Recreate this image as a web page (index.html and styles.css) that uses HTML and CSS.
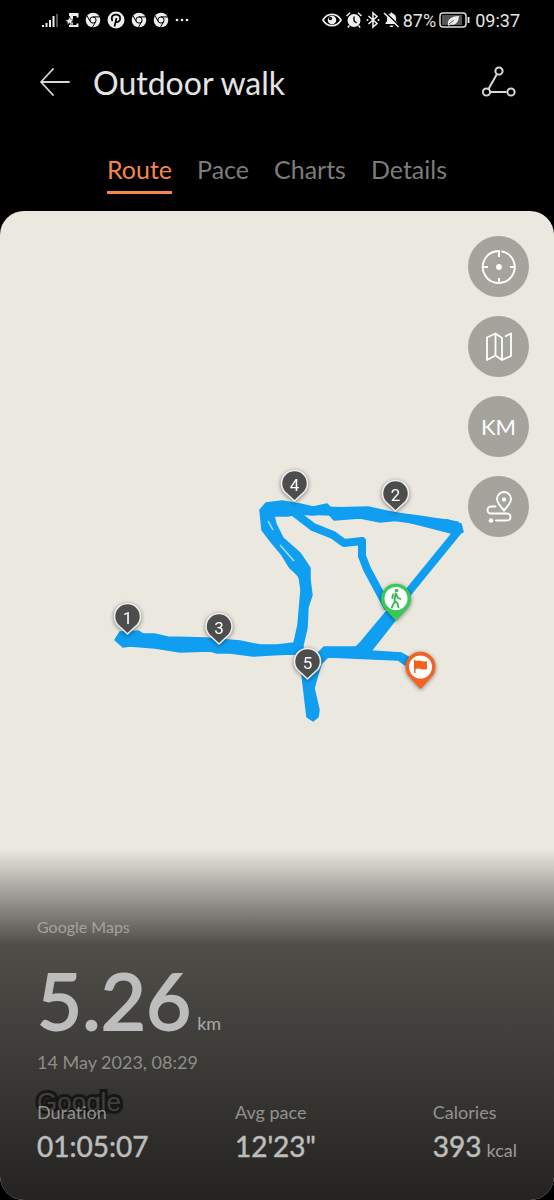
FILE: index.html
```html
<!DOCTYPE html>
<html lang="en">
<head>
<meta charset="utf-8">
<meta name="viewport" content="width=device-width, initial-scale=1">
<title>Outdoor walk</title>
<link rel="stylesheet" href="styles.css">
</head>
<body>
<svg class="defs" aria-hidden="true">
  <defs>
    <symbol id="chrome" viewBox="0 0 16 16">
      <circle cx="8" cy="8" r="7.3" fill="#eee"/>
      <circle cx="8" cy="8" r="3.1" fill="none" stroke="#000" stroke-width="1"/>
      <path d="M8 4.9h7M5.3 9.6L2 3.8M10.7 9.6L7.4 15.3" stroke="#000" stroke-width="1"/>
    </symbol>
    <symbol id="pin" viewBox="0 0 32 36" overflow="visible">
      <path d="M16 32L5.800 22.500A13 13 0 1 1 26.200 22.500Z" fill="#4d4d4d" stroke="#eee" stroke-width="1.600" stroke-linejoin="round"/>
    </symbol>
  </defs>
</svg>

<div class="status">
  <div class="status-group status-left">
    <svg width="18" height="18" viewBox="0 0 18 18" stroke="#eee" stroke-width="2"><path d="M2 14v2M5.500 12v4M9 9v7M12.500 5v11"/><path d="M16 3v13" stroke="#555"/></svg>
    <svg width="14" height="18" viewBox="0 0 14 18" fill="#eee"><path d="M4 2h9.500v4.500h-2V5H8v3L6.500 10 8 12v2h3.500v-1.500h2V16H4v-2h1V5H4Z"/><path d="M4.500 5.500l1 2.700 3.500.3-2.500 2 .7 3.500-2.700-2L2 14l.6-3L0 9l3.300-.3Z" stroke="#000" stroke-width=".5"/></svg>
    <svg width="16" height="16"><use href="#chrome"/></svg>
    <svg width="18" height="18" viewBox="0 0 18 18"><circle cx="9" cy="9" r="8.500" fill="#eee"/><path d="M7.500 15.500L9.500 7M5.500 10C3 5 7 3.500 9.500 3.700c4 .3 4.500 4.300 2.500 6.500-1.500 1.500-3 .8-3.300 0" fill="none" stroke="#000" stroke-width="1.700"/></svg>
    <svg width="16" height="16"><use href="#chrome"/></svg>
    <svg width="16" height="16"><use href="#chrome"/></svg>
    <svg width="14" height="4" viewBox="0 0 14 4" fill="#eee"><circle cx="2" cy="2" r="1.300"/><circle cx="7" cy="2" r="1.300"/><circle cx="12" cy="2" r="1.300"/></svg>
  </div>
  <div class="status-group status-right">
    <svg width="20" height="16" viewBox="0 0 20 16"><path d="M1 8c4-7.500 14-7.500 18 0-4 7.500-14 7.500-18 0Z" fill="none" stroke="#eee" stroke-width="1.600"/><circle cx="10" cy="8" r="4.300" fill="#eee"/><circle cx="8.500" cy="6.500" r="1.700" fill="#000"/></svg>
    <svg width="18" height="18" viewBox="0 0 18 18"><circle cx="9" cy="9.500" r="6.500" fill="#eee"/><path d="M1.500 5L5 1.700M16.500 5L13 1.700M4.500 14.500l-1.700 2M13.500 14.500l1.700 2" stroke="#eee" stroke-width="1.500"/><path d="M9 5.500v4.300l2.500 2.200" fill="none" stroke="#000" stroke-width="1.400"/></svg>
    <svg width="14" height="18" viewBox="0 0 14 18"><path d="M2.500 5l8.500 7.500L7 16V2l4 3.500L2.500 13" fill="none" stroke="#eee" stroke-width="1.600"/><circle cx="1.500" cy="9" r="1" fill="#eee"/><circle cx="12.500" cy="9" r="1" fill="#eee"/></svg>
    <svg width="17" height="18" viewBox="0 0 17 18"><path d="M2.500 13V12L4 10V7c0-3 2-4 3.500-4.500 0-1.500 2-1.500 2 0C11 3 13 4 13 7v3l1.500 2v1ZM6.500 14.500h4c-.5 2-3.500 2-4 0Z" fill="#eee"/><path d="M2.500 1.500L16.500 15" stroke="#000" stroke-width="1.500"/><path d="M1 2l14.500 14" stroke="#eee" stroke-width="1.500"/></svg>
    <span>87%</span>
    <svg width="31" height="16" viewBox="0 0 31 16"><rect x="1" y="1" width="26" height="14" rx="3" fill="none" stroke="#ddd" stroke-width="1.500"/><path d="M3 3h20v10H3Z" fill="#555"/><path d="M29.500 5v6" stroke="#eee" stroke-width="1.800"/><path d="M9 13c-1-6 4-9 11-9 0 6-4 10-9 8.500L10 14Z" fill="#eee"/><path d="M10 12l5-4" stroke="#555"/></svg>
    <time class="clock">09:37</time>
  </div>
</div>

<header class="titlebar">
  <button class="icon-button" type="button" aria-label="Back"><svg width="32" height="30" viewBox="0 0 32 30" fill="none" stroke="#d8d8d8" stroke-width="1.800" stroke-linecap="round" stroke-linejoin="round"><path d="M14 1L2 14l12 13M2 14h28"/></svg></button>
  <h1>Outdoor walk</h1>
  <button class="icon-button share" type="button" aria-label="Share"><svg width="36" height="34" viewBox="0 0 36 34" fill="none" stroke="#d8d8d8" stroke-width="2"><circle cx="18" cy="5" r="3.600"/><circle cx="5.500" cy="26" r="3.600"/><circle cx="30" cy="26" r="3.600"/><path d="M16 8L7.500 23M9.500 26h16"/></svg></button>
</header>

<nav class="tabs">
  <a class="tab active" href="#route" aria-current="page">Route</a>
  <a class="tab" href="#pace">Pace</a>
  <a class="tab" href="#charts">Charts</a>
  <a class="tab" href="#details">Details</a>
</nav>

<main class="map" id="route">
  <svg class="route" viewBox="0 211 554 540" role="img" aria-label="Walk route">
    <g fill="#109ef0" stroke="#109ef0" stroke-width="1.500" stroke-linejoin="round">
      <path d="M260 510L266 503 282 501 300 504 313 507 327 504 331 508 368 507 400 514 420 518 448 520 461 524 463 532 455 534 420 525 400 520 380 522 360 518 334 520 328 513 313 515 298 514 288 516 274 516 276 524 283 538 300 553 310 568 310 580 312 595 308 607 307 628 303 645 303 655 290 654 270 655 253 656 230 653 217 653 210 651 180 652 155 648 130 646 123 647 115 640 120 632 138 631 143 634 154 634 168 637 205 638 240 641 260 645 277 645 294 643 298 625 301 590 299 576 290 568 282 555 272 543 262 530Z"/>
      <path d="M391 606L400 614 371 651 401 653 410 658 405 665 398 660 328 657 321 664 314 688 319 710 318 717 313 721 307 717 302 675 300 655 305 650 318 653 324 647 356 647 361 642Z"/>
    </g>
    <path d="M291 510L313 527 333 535 344 543 362 541 362 556 367 569 388 608M459 530L393 611" fill="none" stroke="#109ef0" stroke-width="8" stroke-linejoin="round"/>
    <path d="M288 557L306 580 306 600M300 510l25 1 35 1 60 8 38 6" fill="none" stroke="#109ef0" stroke-width="9" stroke-linejoin="round"/>
    <path d="M268 521l5 9M280 545l7 8 7 8" fill="none" stroke="#aedcf2" stroke-width="1.500"/>
    <g class="pins">
      <use href="#pin" x="111.500" y="602" width="32" height="36"/><text x="127.500" y="624">1</text>
      <use href="#pin" x="203" y="612" width="32" height="36"/><text x="219" y="634">3</text>
      <use href="#pin" x="278.500" y="469" width="32" height="36"/><text x="294.500" y="491">4</text>
      <use href="#pin" x="379.500" y="479" width="32" height="36"/><text x="395.500" y="501">2</text>
      <use href="#pin" x="291.500" y="647" width="32" height="36"/><text x="307.500" y="669">5</text>
      <path d="M396 621L385 609A15 15 0 1 1 407 609Z" fill="#38c958"/>
      <circle cx="396" cy="598.500" r="11.500" fill="#fff"/>
      <circle cx="396.500" cy="590.500" r="1.800" fill="#38b850"/>
      <path d="M395.500 593.500l-1 7 3 3 1 4M394.800 601.500l-3 6M396 594l2 4 2.500 1" fill="none" stroke="#38b850" stroke-width="1.800" stroke-linecap="round" stroke-linejoin="round"/><path d="M394 593l-2 1.500-.7 4 2 .5" fill="#38b850"/>
      <path d="M420.500 689L409.500 677A15 15 0 1 1 431.500 677Z" fill="#f26222"/>
      <circle cx="420.500" cy="667" r="11.500" fill="#fff"/>
      <path d="M414 660v13h1.500v-4c4-2 7 2 11.500 0v-8c-4 2-7-2-11.500 0v-1Z" fill="#f26222"/>
    </g>
  </svg>

  <div class="tools">
    <button class="tool" type="button" aria-label="Locate"><svg width="36" height="36" viewBox="0 0 36 36" fill="none" stroke="#fff" stroke-width="1.900"><path d="M20.500 2.300A16 16 0 1 1 14 2.500l4-.5v6M2 18h5M29 18h5M18 29v5"/><circle cx="18" cy="18" r="2.900" fill="#fff" stroke="none"/></svg></button>
    <button class="tool" type="button" aria-label="Map type"><svg width="36" height="36" viewBox="0 0 36 36" fill="none" stroke="#fff" stroke-width="1.800" stroke-linejoin="round"><path d="M24 7.500l6-3v22.500l-9 4V9L14.500 4.500 6 8.500V31l8.500-4.500 6.500 4.500M14.500 4.500v22"/></svg></button>
    <button class="tool" type="button" aria-label="Distance markers in KM"><span>KM</span></button>
    <button class="tool" type="button" aria-label="Route playback"><svg width="36" height="36" viewBox="0 0 36 36" fill="none" stroke="#fff" stroke-width="1.900" stroke-linecap="round"><path d="M23 21.500C18 16 16 13 16 10a7 7 0 0 1 14 0c0 3-2 6-7 11.500ZM14.500 17.500H10a3.500 3.500 0 0 0 0 7H26a3.500 3.500 0 0 1 0 7H15"/><circle cx="23" cy="10.500" r="2.200" fill="#fff" stroke="none"/><circle cx="10" cy="31.500" r="2.300" fill="#fff" stroke="none"/></svg></button>
  </div>

  <section class="summary">
    <p class="provider">Google Maps</p>
    <p class="distance"><strong>5.26</strong> <span>km</span></p>
    <p class="date"><time datetime="2023-05-14T08:29">14 May 2023, 08:29</time></p>
    <dl class="stats">
      <div class="stat"><dt><span class="watermark" aria-hidden="true">Google</span><span class="label">Duration</span></dt><dd>01:05:07</dd></div>
      <div class="stat"><dt>Avg pace</dt><dd>12'23"</dd></div>
      <div class="stat"><dt>Calories</dt><dd>393 <small>kcal</small></dd></div>
    </dl>
  </section>
</main>
</body>
</html>
```
FILE: styles.css
```css
* { box-sizing: border-box; }

body {
  margin: 0;
  min-height: 100vh;
  display: flex;
  flex-direction: column;
  background: #000;
  color: #e4e4e4;
  font-family: Lato, "Open Sans", sans-serif;
  font-variant-ligatures: none;
}

svg { display: block; flex: none; }
h1, p, dl, dd { margin: 0; }
button { border: 0; padding: 0; color: inherit; font: inherit; }
.defs { position: absolute; width: 0; height: 0; }

.status {
  display: flex;
  justify-content: space-between;
  height: 40px;
  padding: 0 34px 0 41px;
  font-family: Roboto, sans-serif;
  font-size: 18px;
}
.status-group { display: flex; align-items: center; }
.status-left { gap: 6px; }
.status-right { gap: 3px; }
.clock { margin-left: 2px; }

.titlebar {
  display: flex;
  align-items: center;
  gap: 22px;
  height: 86px;
  padding: 0 37px 0 39px;
}
.titlebar h1 { font-size: 32px; line-height: 40px; font-weight: 400; }
.icon-button { background: none; }
.share { margin-left: auto; }

.tabs {
  display: flex;
  justify-content: center;
  gap: 25px;
  height: 85px;
  padding-top: 26px;
}
.tab {
  height: 42px;
  border-bottom: 3px solid transparent;
  color: #7c7c7c;
  font-size: 25px;
  line-height: 34px;
  text-decoration: none;
}
.tab.active { color: #f58550; border-color: #f58550; }

.map {
  position: relative;
  flex: 1;
  display: flex;
  flex-direction: column;
  overflow: hidden;
  border-radius: 24px;
  background: #ebe8df;
}
.route { position: absolute; top: 0; left: 0; width: 100%; }
.pins { filter: drop-shadow(0 1px 2px #0007); }
.pins text {
  fill: #fff;
  font: 17px Roboto, sans-serif;
  text-anchor: middle;
}

.tools {
  position: relative;
  align-self: flex-end;
  display: grid;
  gap: 19px;
  padding: 25px 25px 0 0;
}
.tool {
  display: grid;
  place-items: center;
  width: 61px;
  height: 61px;
  border-radius: 50%;
  background: #a4a39c;
  color: #fff;
  font-size: 22px;
}

.summary {
  position: relative;
  margin-top: auto;
  padding: 66px 37px 29px;
  background: linear-gradient(#a4a29c00, #a4a29c 42px, #504e49 96px, #242321);
  color: #bdbdbd;
}
.provider { color: #a3a29f; font-size: 16px; line-height: 24px; }
.distance { display: flex; align-items: baseline; gap: 6px; margin-top: 12px; }
.distance strong { font-size: 78px; line-height: 98px; font-weight: 400; -webkit-text-stroke: 2px #bdbdbd; }
.distance span { color: #aaa; font-size: 18px; }
.date { color: #8e8d8a; font-size: 18px; line-height: 26px; }
.stats { display: grid; grid-template-columns: 1fr 1fr auto; margin-top: 24px; }
.stat dt { position: relative; color: #93928f; font-size: 18px; line-height: 26px; }
.stat dd { display: flex; align-items: baseline; gap: 5px; font-size: 28px; line-height: 42px; -webkit-text-stroke: 0.5px; }
.stat small { color: #9b9a98; font-size: 18px; -webkit-text-stroke: 0; }
.label { position: relative; }
.watermark {
  position: absolute;
  top: -14px;
  left: 0;
  color: #41403d;
  font-family: "Liberation Sans", sans-serif;
  font-size: 26px;
  line-height: 34px;
  -webkit-text-stroke: 6px #171716;
  paint-order: stroke fill;
}
```
